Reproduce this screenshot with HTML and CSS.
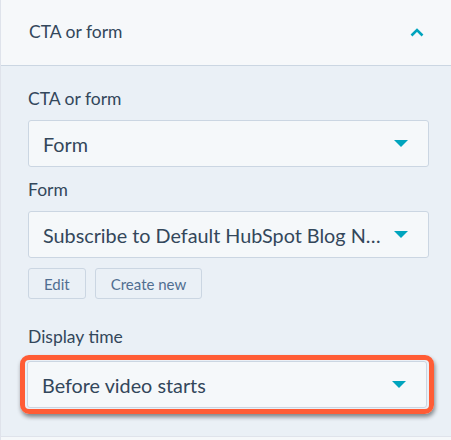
FILE: index.html
```html
<!DOCTYPE html>
<html lang="en">
<head>
    <meta charset="UTF-8">
    <title>CTA or form</title>
    <link rel="stylesheet" href="styles.css">
</head>
<body>
    <div class="panel">
        <div class="panel-header">
            <span>CTA or form</span>
            <svg class="chevron" width="14" height="9" viewBox="0 0 14 9"><path d="M1.5 7.5 L7 2 L12.5 7.5" fill="none" stroke="#00a4bd" stroke-width="2.6"/></svg>
        </div>
        <div class="panel-body">
            <label class="field-label">CTA or form</label>
            <div class="select">
                <span class="select-text">Form</span>
                <span class="caret"></span>
            </div>

            <label class="field-label">Form</label>
            <div class="select">
                <span class="select-text">Subscribe to Default HubSpot Blog N…</span>
                <span class="caret"></span>
            </div>
            <div class="buttons">
                <button class="btn">Edit</button>
                <button class="btn">Create new</button>
            </div>

            <label class="field-label">Display time</label>
            <div class="highlight">
                <div class="select">
                    <span class="select-text">Before video starts</span>
                    <span class="caret"></span>
                </div>
            </div>
        </div>
        <div class="panel-footer"></div>
    </div>
</body>
</html>
```

FILE: styles.css
```css
body {
    margin: 0;
    padding: 0;
    font-family: Lato, "Noto Sans", sans-serif;
    color: #33475b;
    background-color: #f5f8fa;
}
.panel {
    width: 451px;
    height: 440px;
    border-left: 1px solid #dfe3eb;
    box-sizing: border-box;
}
.panel-header {
    height: 66px;
    display: flex;
    align-items: center;
    justify-content: space-between;
    padding: 0 27px 3px 28px;
    box-sizing: border-box;
    font-size: 17.5px;
    background-color: #f6f8fa;
    border-bottom: 1px solid #cbd6e2;
}
.chevron {
    margin-top: 2px;
}
.panel-body {
    background-color: #eaf0f6;
    padding: 21px 22px 0 27px;
    height: 370px;
    box-sizing: border-box;
}
.field-label {
    display: block;
    font-size: 17.5px;
    line-height: 24px;
    margin-bottom: 9px;
}
.select {
    height: 45px;
    display: flex;
    align-items: center;
    padding: 0 20px 0 14px;
    background-color: #f5f8fa;
    border: 1px solid #cbd6e2;
    border-radius: 3px;
    font-size: 19.8px;
    margin-bottom: 11px;
}
.select-text {
    flex: 1;
    white-space: nowrap;
}
.caret {
    width: 0;
    height: 0;
    margin-left: 4px;
    border-left: 7px solid transparent;
    border-right: 7px solid transparent;
    border-top: 7px solid #00a4bd;
}
.buttons {
    display: flex;
    gap: 9px;
    margin-top: -1px;
    margin-bottom: 26px;
}
.btn {
    font-family: Lato, "Noto Sans", sans-serif;
    font-size: 15px;
    color: #506e91;
    background-color: #eaf0f6;
    border: 1px solid #cbd6e2;
    border-radius: 3px;
    height: 31px;
    padding: 0 15px;
}
.highlight {
    margin: -3px -5px 0 -8px;
    border: 5px solid #ff5c35;
    border-radius: 9px;
    padding: 1px 2px;
    box-shadow: 1px 3px 4px rgba(0, 0, 0, 0.45);
}
.highlight .select {
    margin-bottom: 0;
}
.panel-footer {
    border-top: 1px solid #dfe3eb;
    height: 3px;
    background-color: #f5f8fa;
}
```
